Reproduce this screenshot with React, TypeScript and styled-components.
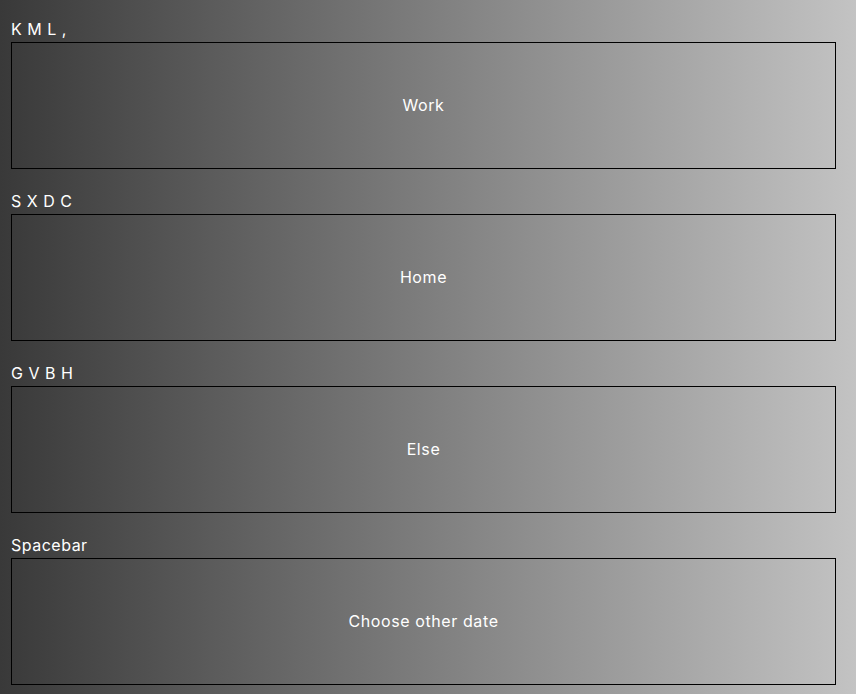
import React from "react";
import styled, { createGlobalStyle } from "styled-components";

const Global = createGlobalStyle`
  html, body { margin: 0; padding: 0; }
  body {
    min-height: 100vh;
    background: linear-gradient(to right, #393939, #c3c3c3);
    background-attachment: fixed;
    font-family: Inter, "Noto Sans", sans-serif;
  }
`;

const Page = styled.div`
  display: flex;
  flex-direction: column;
  padding: 18px 20px 0 11px;
`;

const Section = styled.section`
  display: flex;
  flex-direction: column;
  margin-bottom: 21px;
`;

const Label = styled.label`
  color: #fff;
  font-size: 16px;
  line-height: 22px;
  margin-bottom: 2px;
  letter-spacing: 0.5px;
`;

const Choice = styled.button`
  height: 127px;
  box-sizing: border-box;
  border: 1px solid #000;
  background: transparent;
  color: #fff;
  font-family: inherit;
  font-size: 16px;
  letter-spacing: 0.6px;
  cursor: pointer;
  padding: 0 0 2px;
`;

const items = [
  { key: "K M L ,", text: "Work" },
  { key: "S X D C", text: "Home" },
  { key: "G V B H", text: "Else" },
  { key: "Spacebar", text: "Choose other date" },
];

export default function App() {
  return (
    <>
      <Global />
      <Page>
        {items.map((it) => (
          <Section key={it.text}>
            <Label>{it.key}</Label>
            <Choice>{it.text}</Choice>
          </Section>
        ))}
      </Page>
    </>
  );
}
